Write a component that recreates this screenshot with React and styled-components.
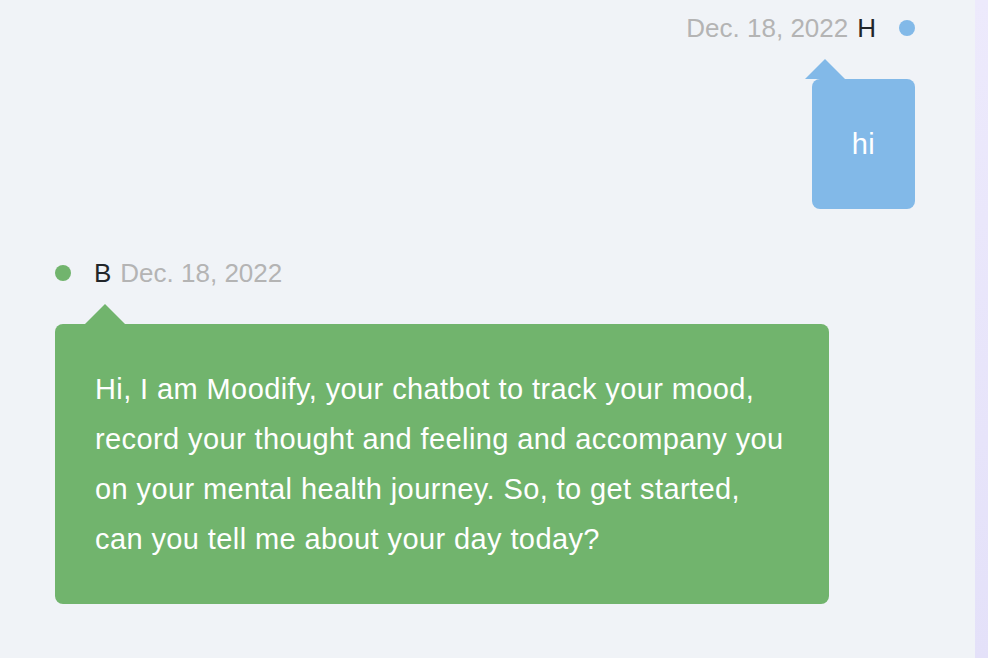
import React from 'react';
import styled, { createGlobalStyle } from 'styled-components';

const GlobalStyle = createGlobalStyle`
  html, body {
    margin: 0;
    padding: 0;
    height: 100%;
  }
  body {
    font-family: "Liberation Sans", Arial, sans-serif;
  }
  #root {
    height: 100%;
  }
`

const Page = styled.div`
  display: flex;
  height: 100vh;
  overflow: hidden;
`

const ChatArea = styled.main`
  flex: 1;
  display: flex;
  flex-direction: column;
  gap: 49px;
  padding: 13px 60px 0 55px;
  background-color: #f0f3f7;
`

const SideStrip = styled.aside`
  width: 13px;
  background: linear-gradient(180deg, #edeafc 0%, #e4e1f9 100%);
`

const Message = styled.div`
  display: flex;
  flex-direction: column;
  align-items: ${props => props.mine ? "flex-end" : "flex-start"};
  gap: 36px;
`

const Header = styled.div`
  display: flex;
  align-items: center;
  flex-direction: ${props => props.mine ? "row-reverse" : "row"};
  height: 30px;
  font-size: 26px;
  line-height: 30px;
`

const Dot = styled.span`
  width: 16px;
  height: 16px;
  border-radius: 50%;
  background-color: ${props => props.color};
  margin: ${props => props.mine ? "0 0 0 23px" : "0 23px 0 0"};
`

const Author = styled.span`
  color: #212529;
`

const Stamp = styled.span`
  color: #b4b4b4;
  margin: ${props => props.mine ? "0 9px 0 0" : "0 0 0 9px"};
`

const Bubble = styled.div`
  position: relative;
  max-width: 90%;
  box-sizing: border-box;
  padding: 40px;
  border-radius: 8px;
  background-color: ${props => props.color};
  color: #ffffff;
  font-size: 29px;
  letter-spacing: 0.4px;
  line-height: 50px;

  &::before {
    content: "";
    position: absolute;
    top: -20px;
    left: ${props => props.arrowLeft}px;
    border-left: 20px solid transparent;
    border-right: 20px solid transparent;
    border-bottom: 20px solid ${props => props.color};
  }
`

const messages = [
  {
    id: 1,
    mine: true,
    author: "H",
    date: "Dec. 18, 2022",
    color: "#82b9e8",
    arrowLeft: -7,
    text: "hi",
  },
  {
    id: 2,
    mine: false,
    author: "B",
    date: "Dec. 18, 2022",
    color: "#71b46d",
    arrowLeft: 30,
    text: "Hi, I am Moodify, your chatbot to track your mood, record your thought and feeling and accompany you on your mental health journey. So, to get started, can you tell me about your day today?",
  },
];

export default function App() {
  return (
    <Page>
      <GlobalStyle />
      <ChatArea>
        {messages.map(m => (
          <Message key={m.id} mine={m.mine}>
            <Header mine={m.mine}>
              <Dot color={m.color} mine={m.mine} />
              <Author>{m.author}</Author>
              <Stamp mine={m.mine}>{m.date}</Stamp>
            </Header>
            <Bubble mine={m.mine} color={m.color} arrowLeft={m.arrowLeft}>
              {m.text}
            </Bubble>
          </Message>
        ))}
      </ChatArea>
      <SideStrip />
    </Page>
  )
}
